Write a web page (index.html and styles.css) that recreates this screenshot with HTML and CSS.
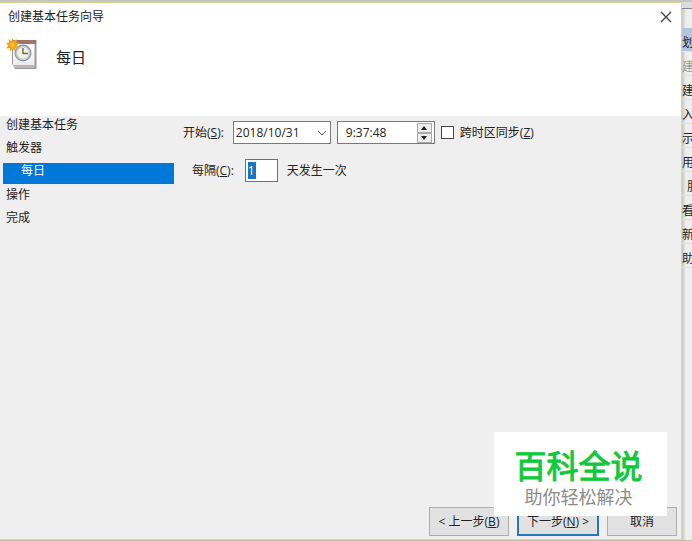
FILE: index.html
```html
<!DOCTYPE html>
<html lang="zh-CN">
<head>
<meta charset="utf-8">
<title>创建基本任务向导</title>
<link rel="stylesheet" href="styles.css">
</head>
<body>
<div class="desktop">
  <main class="dialog">
    <header class="head">
      <div class="titlebar">
        <span class="title">创建基本任务向导</span>
        <button class="close" type="button" aria-label="关闭">
          <svg width="12" height="12" viewBox="0 0 12 12"><path d="M1 1l10 10M11 1L1 11" stroke="#444" stroke-width="1.4" fill="none"/></svg>
        </button>
      </div>
      <div class="banner">
        <svg class="task-icon" width="32" height="32" viewBox="0 0 32 32">
          <defs>
            <linearGradient id="paper" x1="0" y1="0" x2="0" y2="1"><stop offset="0" stop-color="#fff"/><stop offset="1" stop-color="#ececf0"/></linearGradient>
            <radialGradient id="sun"><stop offset="0" stop-color="#ffc838"/><stop offset="1" stop-color="#f29a10"/></radialGradient>
          </defs>
          <path d="M6 2h24.500v29H6z" fill="#9c9694"/>
          <path d="M7 6h21.500v21H7z" fill="url(#paper)"/>
          <path d="M7 2h23v4H7z" fill="#a07468"/>
          <path d="M6 27h23v3H6z" fill="#b8b6b8"/>
          <path d="M5 24l4 7H5z" fill="#fff"/>
          <circle cx="17" cy="15" r="8.5" fill="#94989e"/>
          <circle cx="17" cy="15" r="7.3" fill="#c3c8ce"/>
          <circle cx="17" cy="15" r="5.8" fill="#f3f2e6"/>
          <path d="M17 10v5.500h5" stroke="#77704e" stroke-width="1.500" fill="none"/>
          <path d="M6.500 0l1.300 3L11 1l-.6 3.600L14 5l-3 2 2.500 3-3.700-.4L9 13l-2.500-2.600L4 13.500 3.500 10 0 10.500 2.300 7.500 0 5l3.300-.4L2.500 1 5.500 3z" fill="#f5a51c"/>
          <circle cx="6.500" cy="6.800" r="4" fill="url(#sun)"/>
        </svg>
        <h1 class="heading">每日</h1>
      </div>
    </header>
    <div class="body">
      <ol class="steps">
        <li>创建基本任务</li>
        <li>触发器</li>
        <li class="current" aria-current="step">每日</li>
        <li>操作</li>
        <li>完成</li>
      </ol>
      <form class="form">
        <div class="row">
          <label for="date">开始(<u>S</u>):</label>
          <div class="field date">
            <input id="date" type="text" value="2018/10/31">
            <button class="drop" type="button" aria-label="选择日期">
              <svg width="10" height="6" viewBox="0 0 10 6"><path d="M1 1l4 4 4-4" stroke="#555" fill="none"/></svg>
            </button>
          </div>
          <div class="field time">
            <input type="text" value="9:37:48" aria-label="时间">
            <div class="spin">
              <button type="button" aria-label="增加"><svg width="6" height="4" viewBox="0 0 6 4"><path d="M3 0l3 4H0z" fill="#222"/></svg></button>
              <button type="button" aria-label="减少"><svg width="6" height="4" viewBox="0 0 6 4"><path d="M0 0h6L3 4z" fill="#222"/></svg></button>
            </div>
          </div>
          <input class="check" id="zone" type="checkbox">
          <label for="zone">跨时区同步(<u>Z</u>)</label>
        </div>
        <div class="row repeat">
          <label for="days">每隔(<u>C</u>):</label>
          <div class="field days"><input id="days" type="text" value="1"></div>
          <span>天发生一次</span>
        </div>
      </form>
    </div>
    <footer class="actions">
      <button class="btn back" type="button">&lt; 上一步(<u>B</u>)</button>
      <button class="btn next" type="button">下一步(<u>N</u>) &gt;</button>
      <button class="btn cancel" type="button">取消</button>
    </footer>
    <aside class="mark">
      <strong>百科全说</strong>
      <span>助你轻松解决</span>
    </aside>
  </main>
  <aside class="behind">
    <ul>
      <li class="selected">划</li>
      <li class="dim">建</li>
      <li>建</li>
      <li>入</li>
      <li>示</li>
      <li>用</li>
      <li class="arrow">服</li>
      <li>看</li>
      <li>新</li>
      <li>助</li>
    </ul>
  </aside>
</div>
</body>
</html>
```
FILE: styles.css
```css
* { box-sizing: border-box; }

body {
  margin: 0;
  font: 12px/16px "Open Sans", "Noto Sans CJK SC", sans-serif;
  color: #222;
}

button, input { font: inherit; color: inherit; margin: 0; padding: 0; }
svg { display: block; }

.desktop {
  display: grid;
  grid-template-columns: minmax(0, 1fr) 10px;
  min-height: 100vh;
  padding: 2px 0 1px;
  background: linear-gradient(#c4c4c4 2px, #bcc49a 2px);
  overflow: hidden;
}

.dialog {
  position: relative;
  display: flex;
  flex-direction: column;
  background: #efefef;
  border: solid #d3df8e;
  border-width: 1px 1px 1px 0;
}

.head { background: #fff; height: 113px; }

.titlebar {
  display: flex;
  justify-content: space-between;
  align-items: center;
  height: 28px;
  padding: 0 8px;
}

.close { border: 0; background: none; padding: 1px; }

.banner {
  display: flex;
  align-items: center;
  gap: 18px;
  padding: 7px 6px;
}

.heading { margin: 0; font-size: 15px; line-height: 20px; font-weight: 400; padding-top: 5px; }

.body { display: flex; flex: 1; }

.steps {
  list-style: none;
  margin: 0;
  padding: 1px 0 0 3px;
  width: 174px;
  display: flex;
  flex-direction: column;
  gap: 2px;
}
.steps li { height: 21px; padding-left: 3px; }
.steps .current { background: #0078d7; color: #fff; padding-left: 18px; }
.steps .current ~ li { padding-top: 1px; }

.form { flex: 1; padding: 5px 0 0 9px; }

.row { display: flex; align-items: center; }
.repeat { padding: 15px 0 0 9px; }

.field {
  display: flex;
  align-items: center;
  height: 23px;
  background: #fff;
  border: 1px solid #7a7a7a;
}
.field input { flex: 1; min-width: 0; border: 0; outline: 0; background: none; height: 20px; }

.date { width: 98px; margin: 0 6px 0 9px; padding: 0 3px 0 2px; }
.drop { border: 0; background: none; }
.time { width: 98px; padding: 0 2px 0 8px; }

.spin { display: flex; flex-direction: column; width: 15px; }
.spin button {
  display: flex;
  align-items: center;
  justify-content: center;
  height: 10px;
  background: #eee;
  border: 1px solid #aaa;
}

.check {
  appearance: none;
  width: 13px;
  height: 13px;
  margin: 0 6px;
  background: #fff;
  border: 1px solid #444;
}

.days { width: 33px; margin: 0 9px 0 11px; padding: 0 2px; border-color: #2b83c8; }
.days input { flex: none; width: 8px; height: 17px; background: #1874c4; color: #fff; }

.actions {
  display: flex;
  justify-content: flex-end;
  gap: 8px;
  padding: 0 4px 3px 0;
}
.btn { height: 29px; background: #e1e1e1; border: 1px solid #adadad; white-space: nowrap; }
.back { width: 80px; }
.next { width: 82px; border: 2px solid #2577b5; }
.cancel { width: 70px; }

.mark {
  position: absolute;
  right: 14px;
  bottom: 23px;
  width: 173px;
  height: 84px;
  display: flex;
  flex-direction: column;
  align-items: center;
  padding: 12px 4px 0 0;
  background: #fff;
  font-family: "Noto Sans CJK SC", sans-serif;
}
.mark strong { font-size: 32px; line-height: 40px; font-weight: 400; color: #0fc93c; -webkit-text-stroke: 1px #0fc93c; }
.mark span { font-size: 18px; line-height: 24px; color: #8c8c8c; }

.behind {
  background: linear-gradient(90deg, #c6c8bb, #eeeeef 4px);
  overflow: hidden;
}
.behind ul {
  list-style: none;
  margin: 0;
  padding: 20px 0 0;
  border-top: 6px solid #dcdcdc;
  background: linear-gradient(#888 1px, transparent 1px);
}
.behind li { height: 24px; padding-top: 7px; line-height: 16px; white-space: nowrap; border-bottom: 1px solid #dfdfdf; }
.behind .selected { background: #b3c5dc; }
.behind .dim { color: #999; }
.behind .arrow { padding-left: 5px; }
```
